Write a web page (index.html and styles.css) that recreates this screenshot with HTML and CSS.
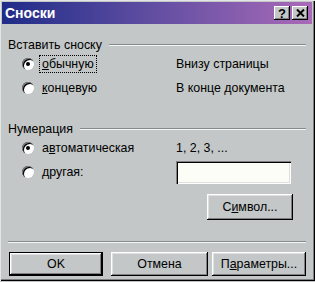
FILE: index.html
```html
<!DOCTYPE html>
<html lang="ru">
<head>
    <meta charset="UTF-8">
    <meta name="viewport" content="width=device-width, initial-scale=1.0">
    <title>Сноски</title>
    <link rel="stylesheet" href="styles.css">
</head>
<body>
    <div class="window">
        <div class="titlebar">
            <span class="title">Сноски</span>
            <div class="title-btns">
                <span class="tbtn">?</span>
                <span class="tbtn">
                    <svg width="9" height="8" viewBox="0 0 9 8"><path d="M1 0.5 L8 7.5 M8 0.5 L1 7.5" stroke="#000" stroke-width="2"/></svg>
                </span>
            </div>
        </div>

        <div class="content">
            <!-- Вставить сноску -->
            <div class="group-head first"><span>Вставить сноску</span><i class="line"></i></div>
            <div class="row">
                <div class="opt"><span class="radio checked"></span><span class="lbl focus"><u>о</u>бычную</span></div>
                <div class="desc">Внизу страницы</div>
            </div>
            <div class="row">
                <div class="opt"><span class="radio"></span><span class="lbl"><u>к</u>онцевую</span></div>
                <div class="desc">В конце документа</div>
            </div>

            <!-- Нумерация -->
            <div class="group-head second"><span>Нумерация</span><i class="line"></i></div>
            <div class="row">
                <div class="opt"><span class="radio checked"></span><span class="lbl">а<u>в</u>томатическая</span></div>
                <div class="desc">1, 2, 3, ...</div>
            </div>
            <div class="row">
                <div class="opt"><span class="radio"></span><span class="lbl"><u>д</u>ругая:</span></div>
                <div class="desc"><span class="field"></span></div>
            </div>

            <div class="symbol-row">
                <span class="btn symbol">С<u>и</u>мвол...</span>
            </div>

            <div class="separator"></div>

            <div class="buttons">
                <span class="btn default">OK</span>
                <span class="btn cancel">Отмена</span>
                <span class="btn params">П<u>а</u>раметры...</span>
            </div>
        </div>
    </div>
</body>
</html>
```

FILE: styles.css
```css
body {
    margin: 0;
    padding: 0;
    background: #c3c7c7;
    font-family: "Liberation Sans", Arial, sans-serif;
    font-size: 12.4px;
    color: #000;
}

.window {
    width: 315px;
    height: 281px;
    box-sizing: border-box;
    padding: 2px 3px 0 2px;
    background: #c3c7c7;
    box-shadow: inset 1px 1px #e4e6e6, inset -1px -1px #000, inset -2px -2px #7c8080;
}

.titlebar {
    height: 22px;
    display: flex;
    align-items: center;
    justify-content: space-between;
    padding: 0 4px 0 3px;
    background: linear-gradient(to right, #1f2c88 0%, #5c4ca0 45%, #a96ab8 100%);
}

.title {
    color: #fff;
    font-weight: bold;
    font-size: 14px;
}

.title-btns {
    display: flex;
    gap: 2px;
}

.tbtn {
    width: 16px;
    height: 14px;
    display: flex;
    align-items: center;
    justify-content: center;
    background: #c3c7c7;
    font-weight: bold;
    font-size: 13px;
    box-shadow: inset -1px -1px #000, inset 1px 1px #fff, inset -2px -2px #808080;
}

.content {
    padding: 0 6px 0 6px;
}

.group-head {
    display: flex;
    align-items: center;
    height: 14px;
    line-height: 14px;
}

.group-head.first {
    margin-top: 14px;
}

.group-head.second {
    margin-top: 22px;
}

.group-head span {
    padding-right: 7px;
}

.line {
    flex: 1;
    height: 0;
    border-top: 1px solid #878b8b;
    border-bottom: 1px solid #f4f6f6;
}

.row {
    display: flex;
    align-items: center;
    height: 24px;
}

.opt {
    width: 168px;
    display: flex;
    align-items: center;
    padding-left: 14px;
    box-sizing: border-box;
}

.radio {
    position: relative;
    width: 12px;
    height: 12px;
    box-sizing: border-box;
    border-radius: 50%;
    background: #fff;
    box-shadow: inset 1px 1px #808080, inset 2px 2px #000;
    margin-right: 5px;
}

.radio.checked::after {
    content: "";
    position: absolute;
    left: 4px;
    top: 4px;
    width: 4px;
    height: 4px;
    border-radius: 50%;
    background: #000;
}

.lbl {
    padding: 1px 2px;
    border: 1px solid transparent;
}

.lbl.focus {
    border: 1px dotted #000;
}

.field {
    display: block;
    width: 115px;
    height: 23px;
    box-sizing: border-box;
    background: #fdfdf8;
    box-shadow: inset 1px 1px #808080, inset 2px 2px #000, inset -1px -1px #fff, inset -2px -2px #dfdfdf;
}

.symbol-row {
    display: flex;
    justify-content: flex-end;
    padding-right: 13px;
    margin-top: 10px;
}

.btn {
    display: flex;
    align-items: center;
    justify-content: center;
    height: 24px;
    box-sizing: border-box;
    background: #c3c7c7;
    box-shadow: inset -1px -1px #000, inset 1px 1px #fff, inset -2px -2px #808080, inset 2px 2px #dfe1e1;
}

.symbol {
    width: 86px;
    height: 26px;
}

.separator {
    margin-top: 21px;
    border-top: 1px solid #878b8b;
    border-bottom: 1px solid #f4f6f6;
}

.buttons {
    display: flex;
    gap: 4px;
    margin-top: 9px;
    padding-left: 1px;
}

.btn.default {
    width: 94px;
    border: 1px solid #000;
    margin-right: 4px;
}

.btn.cancel {
    width: 97px;
}

.btn.params {
    width: 94px;
}
```
